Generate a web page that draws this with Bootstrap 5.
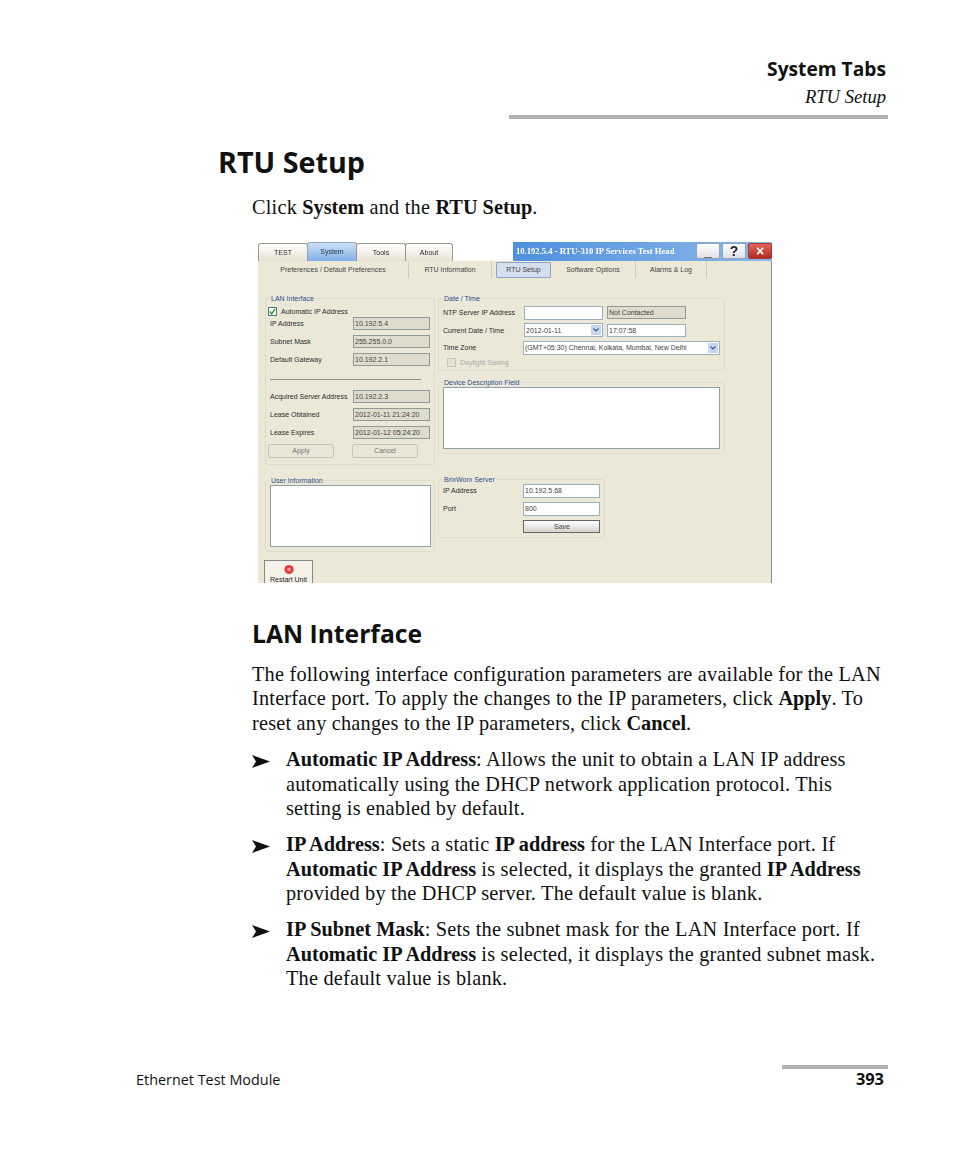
<!DOCTYPE html>
<html lang="en"><head><meta charset="utf-8"><title>RTU Setup</title>
<link href="https://cdn.jsdelivr.net/npm/bootstrap@5.3.0/dist/css/bootstrap.min.css" rel="stylesheet">
<style>
html,body{background:#fff;color:#111;margin:0}
.sheet{width:954px;height:1159px;overflow:hidden;display:flex;flex-direction:column;font-family:"Liberation Serif",serif;font-size:20.3px;letter-spacing:.21px;line-height:24.7px}
.sheet b{letter-spacing:0}
.runhead{align-self:flex-end;margin:56px 66px 0 0;width:379px;text-align:right;padding-right:2px;letter-spacing:0}
.runhead b{display:block;font:700 19.2px/25px "Open Sans",sans-serif}
.runhead i{display:block;font-size:18.6px;line-height:20px;margin-top:6px}
.runrule{height:4px;background:#b3b3b3;margin-top:8px;margin-right:-2px}
.h-main{font:700 28.7px/36px "Open Sans",sans-serif;margin:25px 0 0 218px;color:#111;letter-spacing:0}
.body-col{margin-left:252px;width:640px;white-space:nowrap}
.intro{margin-top:15px}
.h-sub{font:700 24.7px/32px "Open Sans",sans-serif;margin:35px 0 0 252px;color:#111;letter-spacing:0}
.para{margin-top:12px}
.bul{display:flex;margin-top:11px}
.bul-mark{width:34px;flex:none}
.bul-mark svg{width:18px;height:13px;margin-top:8px;display:block}
.foot{margin-top:auto;padding:0 66px 69px 136px;display:flex;justify-content:space-between;align-items:flex-end;letter-spacing:0}
.foot-l{font:14.4px/20px "Open Sans",sans-serif}
.foot-r{width:106px;text-align:right}
.foot-bar{height:4px;background:#b3b3b3}
.foot-n{font:700 16.4px/20px "Open Sans",sans-serif;padding-right:4px;margin-bottom:1px}

/* screenshot */
.shot{margin:22px 0 0 258px;width:514px;height:341px;font:7px/9px "Liberation Sans",sans-serif;letter-spacing:0;color:#2c2c2c;filter:blur(.4px);display:flex;flex-direction:column;white-space:nowrap;overflow:hidden}
.shot-top{height:19px;display:flex;align-items:flex-end;flex:none;position:relative}
.t-tab{height:18px;border:1px solid #9a9a8c;border-bottom:0;border-radius:3px 3px 0 0;background:linear-gradient(#fff,#e6e3d3);display:flex;align-items:center;justify-content:center;margin-right:-1px}
.t-tab.on{background:linear-gradient(#cfe0f5,#7fb0e8);height:19px;color:#234;border-color:#8fa6c0}
.t-title{margin-left:auto;width:259px;height:19px;background:linear-gradient(90deg,#4f8fdc,#8db8ea);color:#fff;font-weight:700;display:flex;align-items:center;padding-left:3px;font-family:"Liberation Serif",serif;font-size:8.6px}
.t-btn{width:24px;height:16px;margin-left:2px;border-radius:2px;display:flex;align-items:center;justify-content:center;background:linear-gradient(#fff,#dfdfe6);color:#222;font:700 14px/13px "Liberation Sans",sans-serif;border:1px solid #8fa6c0}
.t-btn.x{background:linear-gradient(#e0675a,#b02a20);color:#fff;border-color:#a33}
.t-sp{margin-left:auto}
.shot-win{flex:1;background:#ebe8d8;border-right:1px solid #8c8c8c;display:flex;flex-direction:column;min-height:0}
.subtabs{height:18px;display:flex;flex:none;align-items:center}
.s-tab{height:17px;display:flex;align-items:center;justify-content:center;border-right:1px solid #cfccbc;color:#444}
.s-tab.on{background:#d6dff0;border:1px solid #8fa6c0;border-radius:1px;height:16px}
.form-cols{display:flex;gap:3px;padding:19px 0 0 7px;flex:1;min-height:0}
.col-l{width:170px;display:flex;flex-direction:column}
.col-r{width:287px;display:flex;flex-direction:column}
.pnl{border:1px solid #dedbca;border-radius:3px;position:relative;flex:none}
.pnl-t{position:absolute;top:-5px;left:4px;color:#2c4f8c;background:#ebe8d8;padding:0 1px;line-height:9px}
.fld{height:13px;border:1px solid #8f9a98;background:#dfdcce;padding-left:1px;line-height:11px;color:#444;flex:none}
.fld.w{background:#fff;border-color:#9db0bf}
.fr{display:flex;align-items:center;justify-content:space-between;height:18px}
.box{background:#fff;border:1px solid #8ea1a8;flex:none}
.ck{width:9px;height:9px;background:#fff;border:1px solid #4d7a86;display:flex;align-items:center;justify-content:center}
.xbtn{height:14px;border:1px solid #c9c6b6;background:#e9e6d7;color:#777;text-align:center;line-height:12px;border-radius:2px;width:66px}
.combo{display:flex;justify-content:space-between;align-items:center;padding-right:1px}
.combo span.ar{width:10px;height:10px;background:#c6d6f0;display:flex;align-items:center;justify-content:center}
.combo svg{width:6px;height:4px}
.restart{width:49px;height:24px;margin:8px 0 0 -1px;border:1px solid #888;border-bottom:0;background:#f4f2e8;display:flex;flex-direction:column;align-items:center;justify-content:flex-end;color:#222;flex:none}
.restart svg{width:10px;height:11px;display:block}
</style></head><body>
<div class="sheet">
  <div class="runhead"><b>System Tabs</b><i>RTU Setup</i><div class="runrule"></div></div>
  <h1 class="h-main">RTU Setup</h1>
  <div class="body-col intro">Click <b>System</b> and the <b>RTU Setup</b>.</div>

  <div class="shot">
    <div class="shot-top">
      <div class="t-tab" style="width:50px">TEST</div><div class="t-tab on" style="width:50px">System</div><div class="t-tab" style="width:50px">Tools</div><div class="t-tab" style="width:48px">About</div>
      <div class="t-title">10.192.5.4 - RTU-310 IP Services Test Head<span class="t-btn t-sp">_</span><span class="t-btn">?</span><span class="t-btn x">×</span></div>
    </div>
    <div class="shot-win">
      <div class="subtabs">
        <div class="s-tab" style="width:151px">Preferences / Default Preferences</div>
        <div class="s-tab" style="width:83px">RTU Information</div>
        <div class="s-tab on" style="width:55px;margin-left:4px">RTU Setup</div>
        <div class="s-tab" style="width:85px">Software Options</div>
        <div class="s-tab" style="width:71px">Alarms &amp; Log</div>
      </div>
      <div class="form-cols">
        <div class="col-l">
          <div class="pnl" style="height:167px"><span class="pnl-t">LAN Interface</span>
            <div class="d-flex flex-column px-1" style="padding-top:8px">
              <div class="d-flex align-items-center gap-1" style="height:9px;margin-left:-2px"><span class="ck"><svg width="7" height="7" viewBox="0 0 6 6"><path d="M.7 3l1.6 2L5.3.8" fill="none" stroke="#2a9a2a" stroke-width="1.2"/></svg></span>Automatic IP Address</div>
              <div class="fr" style="margin-top:-1px"><span>IP Address</span><span class="fld" style="width:77px">10.192.5.4</span></div>
              <div class="fr"><span>Subnet Mask</span><span class="fld" style="width:77px">255.255.0.0</span></div>
              <div class="fr"><span>Default Gateway</span><span class="fld" style="width:77px">10.192.2.1</span></div>
              <div style="border-top:1px solid #8f8f82;margin:10px 9px 0 0"></div>
              <div class="fr" style="margin-top:8px"><span>Acquired Server Address</span><span class="fld" style="width:77px">10.192.2.3</span></div>
              <div class="fr"><span>Lease Obtained</span><span class="fld" style="width:77px">2012-01-11 21:24:20</span></div>
              <div class="fr"><span>Lease Expires</span><span class="fld" style="width:77px">2012-01-12 05:24:20</span></div>
              <div class="d-flex" style="gap:18px;margin:2px 0 0 -2px"><span class="xbtn">Apply</span><span class="xbtn">Cancel</span></div>
            </div>
          </div>
          <div class="pnl" style="height:72px;margin-top:15px"><span class="pnl-t">User Information</span>
            <div class="box" style="width:161px;height:62px;margin:4px 0 0 4px"></div>
          </div>
          <div class="restart"><svg viewBox="0 0 10 10"><circle cx="5" cy="5" r="4.6" fill="#e23b3b"/><circle cx="5" cy="5" r="1.8" fill="#f4a0a0"/></svg><span>Restart Unit</span></div>
        </div>
        <div class="col-r">
          <div class="pnl" style="height:73px"><span class="pnl-t">Date / Time</span>
            <div class="px-1" style="padding-top:5px">
              <div class="d-flex align-items-center" style="height:18px"><span style="width:81px">NTP Server IP Address</span><span class="fld w" style="width:79px;height:14px"></span><span class="fld ms-1" style="width:79px">Not Contacted</span></div>
              <div class="d-flex align-items-center" style="height:17px"><span style="width:81px">Current Date / Time</span><span class="fld w combo" style="width:79px;height:14px">2012-01-11<span class="ar"><svg viewBox="0 0 6 4"><path d="M.5.5L3 3 5.5.5" fill="none" stroke="#3c5f9c" stroke-width="1.2"/></svg></span></span><span class="fld w ms-1" style="width:79px">17:07:58</span></div>
              <div class="d-flex align-items-center" style="height:18px"><span style="width:81px">Time Zone</span><span class="fld w combo" style="width:197px;height:14px">(GMT+05:30) Chennai, Kolkata, Mumbai, New Delhi<span class="ar"><svg viewBox="0 0 6 4"><path d="M.5.5L3 3 5.5.5" fill="none" stroke="#3c5f9c" stroke-width="1.2"/></svg></span></span></div>
              <div class="d-flex align-items-center gap-1 ps-1" style="height:12px;color:#aaa"><span class="ck" style="background:#e6e3d6;border-color:#c8c6b8"></span>Daylight Saving</div>
            </div>
          </div>
          <div class="pnl" style="height:72px;margin-top:11px"><span class="pnl-t">Device Description Field</span>
            <div class="box" style="width:277px;height:62px;margin:4px 0 0 4px"></div>
          </div>
          <div class="pnl" style="height:59px;margin-top:25px;width:167px"><span class="pnl-t">BrixWorx Server</span>
            <div class="px-1" style="padding-top:4px">
              <div class="d-flex align-items-start" style="height:18px"><span style="width:81px;padding-top:2px">IP Address</span><span class="fld w" style="width:77px;height:14px">10.192.5.68</span></div>
              <div class="d-flex align-items-start" style="height:18px"><span style="width:81px;padding-top:2px">Port</span><span class="fld w" style="width:77px;height:14px">800</span></div>
              <div class="d-flex"><span style="width:81px"></span><span class="fld" style="width:77px;height:13px;text-align:center;background:linear-gradient(#fff,#d5d3cf);border-color:#666">Save</span></div>
            </div>
          </div>
        </div>
      </div>
    </div>
  </div>

  <h2 class="h-sub">LAN Interface</h2>
  <div class="body-col para">The following interface configuration parameters are available for the LAN<br>Interface port. To apply the changes to the IP parameters, click <b>Apply</b>. To<br>reset any changes to the IP parameters, click <b>Cancel</b>.</div>
  <div class="body-col bul"><div class="bul-mark"><svg viewBox="0 0 18 13"><path d="M0 0L18 6.5 0 13 4 6.5Z" fill="#111"/></svg></div><div><b>Automatic IP Address</b>: Allows the unit to obtain a LAN IP address<br>automatically using the DHCP network application protocol. This<br>setting is enabled by default.</div></div>
  <div class="body-col bul"><div class="bul-mark"><svg viewBox="0 0 18 13"><path d="M0 0L18 6.5 0 13 4 6.5Z" fill="#111"/></svg></div><div><b>IP Address</b>: Sets a static <b>IP address</b> for the LAN Interface port. If<br><b>Automatic IP Address</b> is selected, it displays the granted <b>IP Address</b><br>provided by the DHCP server. The default value is blank.</div></div>
  <div class="body-col bul"><div class="bul-mark"><svg viewBox="0 0 18 13"><path d="M0 0L18 6.5 0 13 4 6.5Z" fill="#111"/></svg></div><div><b>IP Subnet Mask</b>: Sets the subnet mask for the LAN Interface port. If<br><b>Automatic IP Address</b> is selected, it displays the granted subnet mask.<br>The default value is blank.</div></div>

  <div class="foot"><div class="foot-l">Ethernet Test Module</div><div class="foot-r"><div class="foot-bar"></div><div class="foot-n">393</div></div></div>
</div>
<script src="https://cdn.jsdelivr.net/npm/bootstrap@5.3.0/dist/js/bootstrap.bundle.min.js"></script>
</body></html>
